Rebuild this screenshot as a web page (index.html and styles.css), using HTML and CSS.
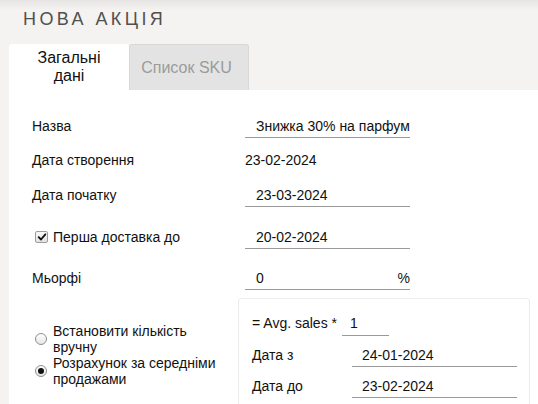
FILE: index.html
```html
<!DOCTYPE html>
<html lang="uk">
<head>
<meta charset="utf-8">
<title>Нова акція</title>
<link rel="stylesheet" href="styles.css">
</head>
<body>
<h1 class="title">НОВА АКЦІЯ</h1>
<div class="tabs">
  <div class="tab tab-active">Загальні<br>дані</div>
  <div class="tab tab-inactive">Список SKU</div>
</div>
<div class="panel">
  <div class="form">
    <div class="row">
      <div class="label">Назва</div>
      <div class="field"><span class="field-text">Знижка 30% на парфум</span></div>
    </div>
    <div class="row row-b">
      <div class="label">Дата створення</div>
      <div class="plain">23-02-2024</div>
    </div>
    <div class="row row-c">
      <div class="label">Дата початку</div>
      <div class="field"><span class="field-text">23-03-2024</span></div>
    </div>
    <div class="row row-d">
      <div class="label label-check">
        <span class="check"><svg viewBox="0 0 12 12" width="10" height="10"><path d="M2 6.2 L4.8 9 L10 2.8" fill="none" stroke="#111" stroke-width="2.2" stroke-linecap="round" stroke-linejoin="round"/></svg></span>
        <span>Перша доставка до</span>
      </div>
      <div class="field"><span class="field-text">20-02-2024</span></div>
    </div>
    <div class="row row-e">
      <div class="label">Мьорфі</div>
      <div class="field"><span class="field-text">0</span><span class="suffix">%</span></div>
    </div>
  </div>
  <div class="bottom">
    <div class="radios">
      <div class="radio-row"><span class="radio"></span><span class="radio-label">Встановити кількість вручну</span></div>
      <div class="radio-row"><span class="radio radio-on"></span><span class="radio-label">Розрахунок за середніми продажами</span></div>
    </div>
    <div class="box">
      <div class="box-row">
        <div class="avg-label">= Avg. sales *</div>
        <div class="field field-small"><span class="field-text">1</span></div>
      </div>
      <div class="box-row">
        <div class="box-label">Дата з</div>
        <div class="field field-date"><span class="field-text">24-01-2024</span></div>
      </div>
      <div class="box-row">
        <div class="box-label">Дата до</div>
        <div class="field field-date"><span class="field-text">23-02-2024</span></div>
      </div>
    </div>
  </div>
</div>
</body>
</html>
```
FILE: styles.css
```css
* { box-sizing: border-box; }
html, body { height: 100%; }
body {
  margin: 0;
  font-family: "Liberation Sans", Arial, Helvetica, sans-serif;
  color: #111;
  background-color: #f4f3f1;
  background-image: linear-gradient(to bottom, #e6e5e3 0, #f4f3f1 10px);
  background-repeat: no-repeat;
  background-size: 100% 12px;
  overflow: hidden;
  display: flex;
  flex-direction: column;
}
.title {
  margin: 0;
  padding: 8px 0 0 23px;
  font-size: 18px;
  line-height: 22px;
  font-weight: normal;
  letter-spacing: 3.4px;
  color: #505050;
}
.tabs {
  display: flex;
  margin: 14px 0 0 9px;
}
.tab {
  width: 120px;
  height: 46px;
  display: flex;
  align-items: center;
  justify-content: center;
  text-align: center;
  font-size: 16px;
  line-height: 18px;
  border-radius: 3px 3px 0 0;
}
.tab-active {
  background: #fff;
  color: #111;
}
.tab-inactive {
  background: #e3e3e3;
  border: 1px solid #d8d8d8;
  border-bottom: none;
  color: #9b9b9b;
  padding-right: 5px;
}
.panel {
  flex: 1;
  min-height: 0;
  margin-left: 9px;
  background: #fff;
  padding: 24px 0 0 0;
  display: flex;
  flex-direction: column;
}
.form {
  display: flex;
  flex-direction: column;
  gap: 10px;
  padding-left: 23px;
}
.row {
  display: flex;
  align-items: center;
  height: 24px;
  font-size: 14px;
}
.row-c { margin-top: 1px; }
.row-d { margin-top: 8px; }
.row-e { margin-top: 7px; }
.label {
  width: 213px;
  display: flex;
  align-items: center;
}
.label-check { padding-left: 3px; }
.check {
  width: 13px;
  height: 12px;
  border: 1px solid #9d9d9d;
  border-radius: 2px;
  background: linear-gradient(#fafafa, #e2e2e2);
  display: inline-flex;
  align-items: center;
  justify-content: center;
  margin-right: 5px;
  margin-top: -1px;
}
.field {
  width: 165px;
  height: 24px;
  border-bottom: 1px solid #9a9a9a;
  display: flex;
  align-items: center;
  justify-content: space-between;
  padding-left: 11px;
  font-size: 14px;
}
.suffix { color: #111; }
.plain { font-size: 14px; }
.bottom {
  flex: 1;
  min-height: 0;
  display: flex;
  margin-top: 8px;
}
.radios {
  width: 229px;
  padding: 25px 0 0 26px;
  font-size: 14px;
  line-height: 16px;
}
.radio-row {
  display: flex;
  align-items: center;
}
.radio {
  flex: none;
  width: 12px;
  height: 12px;
  border-radius: 50%;
  border: 1px solid #8f8f8f;
  background: linear-gradient(#fff, #e6e6e6);
  margin-right: 6px;
  display: flex;
  align-items: center;
  justify-content: center;
}
.radio-on::after {
  content: "";
  width: 6px;
  height: 6px;
  border-radius: 50%;
  background: #111;
}
.radio-label { width: 180px; }
.box {
  width: 292px;
  border: 1px solid #ececec;
  border-bottom: none;
  border-radius: 4px 4px 0 0;
  padding: 13px 0 0 13px;
  display: flex;
  flex-direction: column;
  gap: 7px;
  font-size: 14px;
}
.box-row {
  display: flex;
  align-items: center;
  height: 24px;
}
.avg-label { margin-right: 5px; margin-top: -2px; }
.field-small {
  width: 47px;
  padding-left: 8px;
}
.field-small .field-text { margin-top: -2px; }
.box-label { width: 100px; }
.field-date {
  width: 165px;
  padding-left: 10px;
}
```
